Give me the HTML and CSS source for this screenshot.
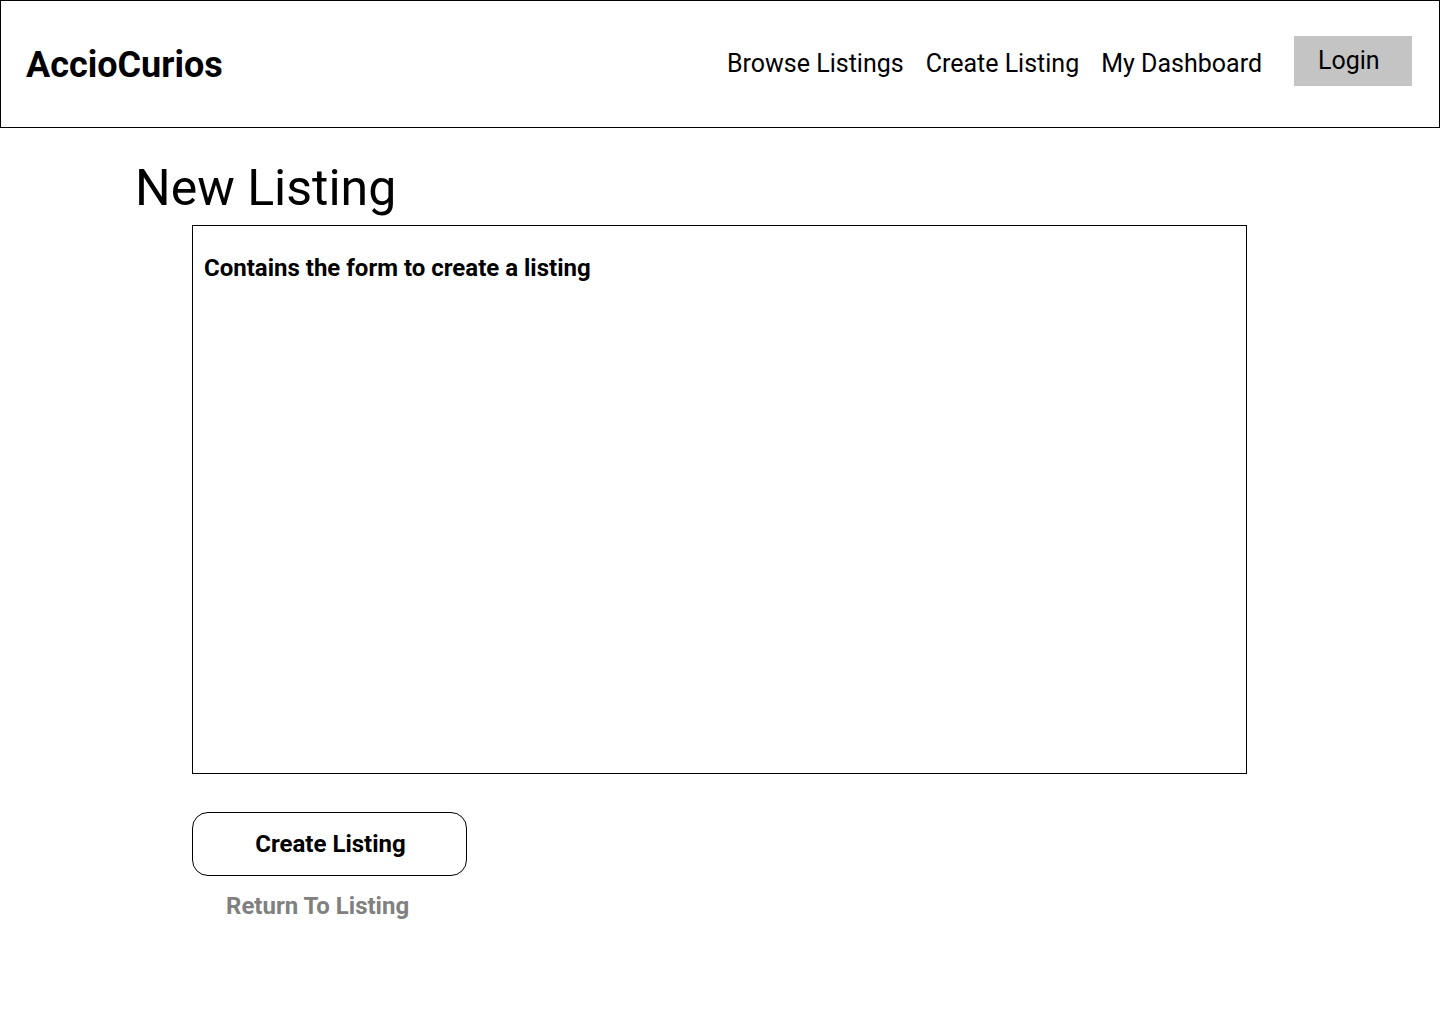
FILE: index.html
```html
<!DOCTYPE html>
<html>
<head>
<meta charset="utf-8">
<link rel="stylesheet" href="styles.css">
</head>
<body>
<header class="topbar">
  <div class="logo">AccioCurios</div>
  <nav class="nav">
    <a class="nav-link">Browse Listings</a>
    <a class="nav-link">Create Listing</a>
    <a class="nav-link">My Dashboard</a>
    <button class="login">Login</button>
  </nav>
</header>
<main class="main">
  <h1 class="title">New Listing</h1>
  <section class="form-box">
    <p class="form-note">Contains the form to create a listing</p>
  </section>
  <div class="actions">
    <button class="create-btn">Create Listing</button>
    <a class="return-link">Return To Listing</a>
  </div>
</main>
</body>
</html>
```
FILE: styles.css
```css
* { box-sizing: border-box; }
html, body { margin: 0; padding: 0; }
body {
  font-family: Roboto, "Liberation Sans", sans-serif;
  color: #000;
  background: #fff;
  width: 1440px;
}
.topbar {
  height: 128px;
  border: 1px solid #000;
  display: flex;
  align-items: center;
  justify-content: space-between;
  padding: 0 27px 0 25px;
}
.logo {
  font-size: 36px;
  font-weight: 700;
  margin-top: 2px;
}
.nav {
  display: flex;
  align-items: center;
}
.nav-link {
  font-size: 25px;
  margin-right: 22px;
  line-height: 28px;
}
.nav-link:nth-child(3) { margin-right: 32px; }
.login {
  width: 118px;
  height: 50px;
  background: #c4c4c4;
  border: none;
  font-family: inherit;
  font-size: 25px;
  text-align: left;
  padding: 0 0 2px 24px;
  color: #000;
  margin-top: -6px;
}
.main {
  padding: 0 0 0 135px;
}
.title {
  font-size: 50px;
  font-weight: 400;
  margin: 31px 0 0 0;
  line-height: 58px;
  height: 66px;
}
.form-box {
  margin-left: 57px;
  width: 1055px;
  height: 549px;
  border: 1px solid #000;
  padding: 27px 11px;
}
.form-note {
  margin: 0;
  font-size: 24px;
  font-weight: 700;
  line-height: 30px;
}
.actions {
  margin-left: 57px;
  margin-top: 38px;
  display: flex;
  flex-direction: column;
  align-items: flex-start;
}
.create-btn {
  width: 275px;
  height: 64px;
  border: 1px solid #000;
  border-radius: 16px;
  background: #fff;
  font-family: inherit;
  font-size: 24px;
  font-weight: 700;
  color: #000;
  padding: 0 0 0 2px;
}
.return-link {
  margin-top: 16px;
  margin-left: 34px;
  font-size: 24px;
  font-weight: 700;
  color: #808080;
  line-height: 28px;
}
```
